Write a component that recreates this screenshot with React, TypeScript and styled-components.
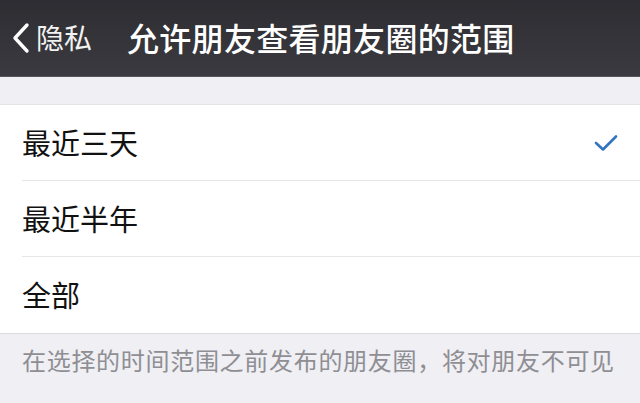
import React, { FC } from 'react'
import styled, { createGlobalStyle } from 'styled-components'

const GlobalStyle = createGlobalStyle`
  html, body {
    margin: 0;
    padding: 0;
    background: #efeff4;
  }
  body {
    font-family: "Noto Sans CJK SC", "Noto Sans", sans-serif;
  }
`

const options = [
  { label: '最近三天', checked: true },
  { label: '最近半年', checked: false },
  { label: '全部', checked: false },
]

const Back: FC = () => (
  <svg width="20" height="32" viewBox="0 0 20 32">
    <path d="M16 3 L4 16 L16 29" fill="none" stroke="#fff" strokeWidth="3.4" strokeLinecap="round" strokeLinejoin="round" />
  </svg>
)

const Check: FC = () => (
  <svg width="24" height="18" viewBox="0 0 24 18">
    <path d="M2 9 L9 15.5 L22 2.5" fill="none" stroke="#3273c2" strokeWidth="2.6" strokeLinecap="round" strokeLinejoin="round" />
  </svg>
)

const App: FC = () => (
  <>
    <GlobalStyle />
    <Page>
      <NavBar>
        <BackButton>
          <Back />
          <BackLabel>隐私</BackLabel>
        </BackButton>
        <Title>允许朋友查看朋友圈的范围</Title>
      </NavBar>
      <List>
        {options.map((item, index) => (
          <Row key={item.label} last={index === options.length - 1}>
            <RowLabel>{item.label}</RowLabel>
            {item.checked && <Check />}
          </Row>
        ))}
      </List>
      <Footer>在选择的时间范围之前发布的朋友圈，将对朋友不可见</Footer>
    </Page>
  </>
)

export default App

const Page = styled.div`
  width: 640px;
  height: 403px;
  overflow: hidden;
  background: #efeff4;
`

const NavBar = styled.div`
  height: 77px;
  display: flex;
  align-items: center;
  background: linear-gradient(#2d2d32, #3a3a40);
  border-bottom: 1px solid #55555a;
  box-sizing: border-box;
  color: #fff;
`

const BackButton = styled.div`
  display: flex;
  align-items: center;
  gap: 5px;
  padding-left: 11px;
  width: 127px;
  box-sizing: border-box;
`

const BackLabel = styled.span`
  font-size: 28px;
  color: #f2f2f2;
  padding-bottom: 2px;
`

const Title = styled.div`
  font-size: 32px;
  font-weight: 500;
  letter-spacing: 0.3px;
  padding-bottom: 2px;
`

const List = styled.div`
  margin-top: 27px;
  background: #fff;
  border-top: 1px solid #e4e4e6;
  border-bottom: 1px solid #dcdcdf;
`

const Row = styled.div<{ last: boolean }>`
  height: 76px;
  box-sizing: border-box;
  margin-left: 22px;
  padding-right: 22px;
  display: flex;
  align-items: center;
  justify-content: space-between;
  border-bottom: ${({ last }) => (last ? 'none' : '1.5px solid #e6e6e8')};
`

const RowLabel = styled.span`
  font-size: 29px;
  color: #111;
  padding-bottom: 2px;
`

const Footer = styled.div`
  padding: 8px 22px 0;
  font-size: 24px;
  color: #8e8e93;
  letter-spacing: 0.7px;
  white-space: nowrap;
`
